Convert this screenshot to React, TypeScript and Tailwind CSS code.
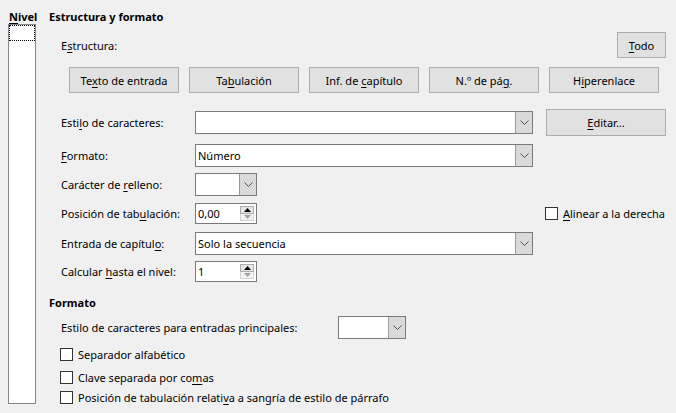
import React from "react";

const U = ({ children }: { children: React.ReactNode }) => (
  <span className="underline underline-offset-[2px]">{children}</span>
);

const Chevron = () => (
  <svg width="9" height="5" viewBox="0 0 9 5">
    <path d="M0.5 0.5 L4.5 4.5 L8.5 0.5" stroke="#505050" strokeWidth="1" fill="none" />
  </svg>
);

const Combo = ({ className, text }: { className: string; text?: string }) => (
  <div className={"flex border border-[#7a7a7a] bg-white " + className}>
    <div className="flex flex-1 items-center pl-[2px]">{text}</div>
    <div className="flex w-[17px] items-center justify-center border-l border-[#9a9a9a] bg-[#dadada]">
      <Chevron />
    </div>
  </div>
);

const Spinner = ({ text }: { text: string }) => (
  <div className="flex h-[21px] w-[62px] border border-[#7a7a7a] bg-white">
    <div className="flex flex-1 items-center pl-[2px]">{text}</div>
    <div className="my-[2px] mr-[2px] flex w-[14px] flex-col">
      <div className="flex h-[8px] items-center justify-center border border-[#adadad] bg-[#e5e5e5]">
        <svg width="7" height="4" viewBox="0 0 7 4">
          <path d="M0 4 L3.5 0 L7 4Z" fill="#000" />
        </svg>
      </div>
      <div className="flex h-[8px] items-center justify-center border border-t-0 border-[#d4d4d4] bg-[#f2f2f2]">
        <svg width="7" height="4" viewBox="0 0 7 4">
          <path d="M0 0 L3.5 4 L7 0Z" fill="#a0a0a0" />
        </svg>
      </div>
    </div>
  </div>
);

const Btn = ({ className, children }: { className: string; children: React.ReactNode }) => (
  <div
    className={
      "flex items-center justify-center border border-[#adadad] bg-[#e1e1e1] " + className
    }
  >
    <span>{children}</span>
  </div>
);

const Check = ({ children }: { children: React.ReactNode }) => (
  <div className="flex h-[17px] items-center">
    <div className="h-[13px] w-[13px] border border-[#333333] bg-white" />
    <div className="ml-[5px]">{children}</div>
  </div>
);

export default function App() {
  return (
    <div className="flex h-[413px] w-[676px] overflow-hidden bg-[#f0f0f0] font-['Noto_Sans',sans-serif] text-[11px] leading-[15px] text-black">
      {/* Left: Nivel */}
      <div className="ml-2 flex w-[28px] flex-col pt-[9px]">
        <div className="h-[15px] pl-px font-bold">
          <U>N</U>ivel
        </div>
        <div className="h-[380px] border border-[#828790] bg-white">
          <div className="h-[16px] border border-dotted border-black" />
        </div>
      </div>

      {/* Right */}
      <div className="ml-[13px] flex flex-1 flex-col pt-[9px]">
        <div className="h-[15px] font-bold">Estructura y formato</div>

        <div className="mt-[8px] flex h-[26px] items-center justify-between pl-3 pr-[10px]">
          <div>
            E<U>s</U>tructura:
          </div>
          <Btn className="h-[26px] w-[49px]">
            <U>T</U>odo
          </Btn>
        </div>

        <div className="mt-[9px] flex h-[26px] gap-[10px] pl-5">
          <Btn className="w-[110px]">
            Te<U>x</U>to de entrada
          </Btn>
          <Btn className="w-[110px]">
            Ta<U>b</U>ulación
          </Btn>
          <Btn className="w-[110px]">
            Inf. de <U>c</U>apítulo
          </Btn>
          <Btn className="w-[110px]">
            N.º de pá<U>g</U>.
          </Btn>
          <Btn className="w-[110px]">
            H<U>i</U>perenlace
          </Btn>
        </div>

        <div className="mt-[16px] flex h-[27px] items-center pl-3">
          <div className="w-[134px]">
            Esti<U>l</U>o de caracteres:
          </div>
          <Combo className="h-[23px] w-[338px]" />
          <Btn className="ml-[13px] h-[27px] w-[120px]">
            <U>E</U>ditar...
          </Btn>
        </div>

        <div className="mt-[8px] flex h-[23px] items-center pl-3">
          <div className="w-[134px]">
            <U>F</U>ormato:
          </div>
          <Combo className="h-[23px] w-[338px]" text="Número" />
        </div>

        <div className="mt-[6px] flex h-[23px] items-center pl-3">
          <div className="w-[134px]">
            Carácter de <U>r</U>elleno:
          </div>
          <Combo className="h-[23px] w-[62px]" />
        </div>

        <div className="mt-[7px] flex h-[21px] items-center pl-3">
          <div className="w-[134px]">
            Posición de tab<U>u</U>lación:
          </div>
          <Spinner text="0,00" />
          <div className="ml-[288px] flex items-center">
            <div className="h-[13px] w-[13px] border border-[#333333] bg-white" />
            <div className="ml-[5px]">
              <U>A</U>linear a la derecha
            </div>
          </div>
        </div>

        <div className="mt-[8px] flex h-[23px] items-center pl-3">
          <div className="w-[134px]">
            Entrada de capítul<U>o</U>:
          </div>
          <Combo className="h-[23px] w-[338px]" text="Solo la secuencia" />
        </div>

        <div className="mt-[6px] flex h-[21px] items-center pl-3">
          <div className="w-[134px]">
            Calcular <U>h</U>asta el nivel:
          </div>
          <Spinner text="1" />
        </div>

        <div className="mt-[13px] h-[15px] font-bold">Formato</div>

        <div className="mt-[6px] flex h-[23px] items-center pl-3">
          <div className="w-[277px]">Estilo de caracteres para entradas principales:</div>
          <Combo className="h-[23px] w-[68px]" />
        </div>

        <div className="mt-[7px] pl-[11px]">
          <Check>Separador alfabético</Check>
        </div>
        <div className="mt-[6px] pl-[11px]">
          <Check>
            Clave separada por co<U>m</U>as
          </Check>
        </div>
        <div className="mt-[3px] pl-[11px]">
          <Check>
            Posición de tabulación relati<U>v</U>a a sangría de estilo de párrafo
          </Check>
        </div>
      </div>
    </div>
  );
}
